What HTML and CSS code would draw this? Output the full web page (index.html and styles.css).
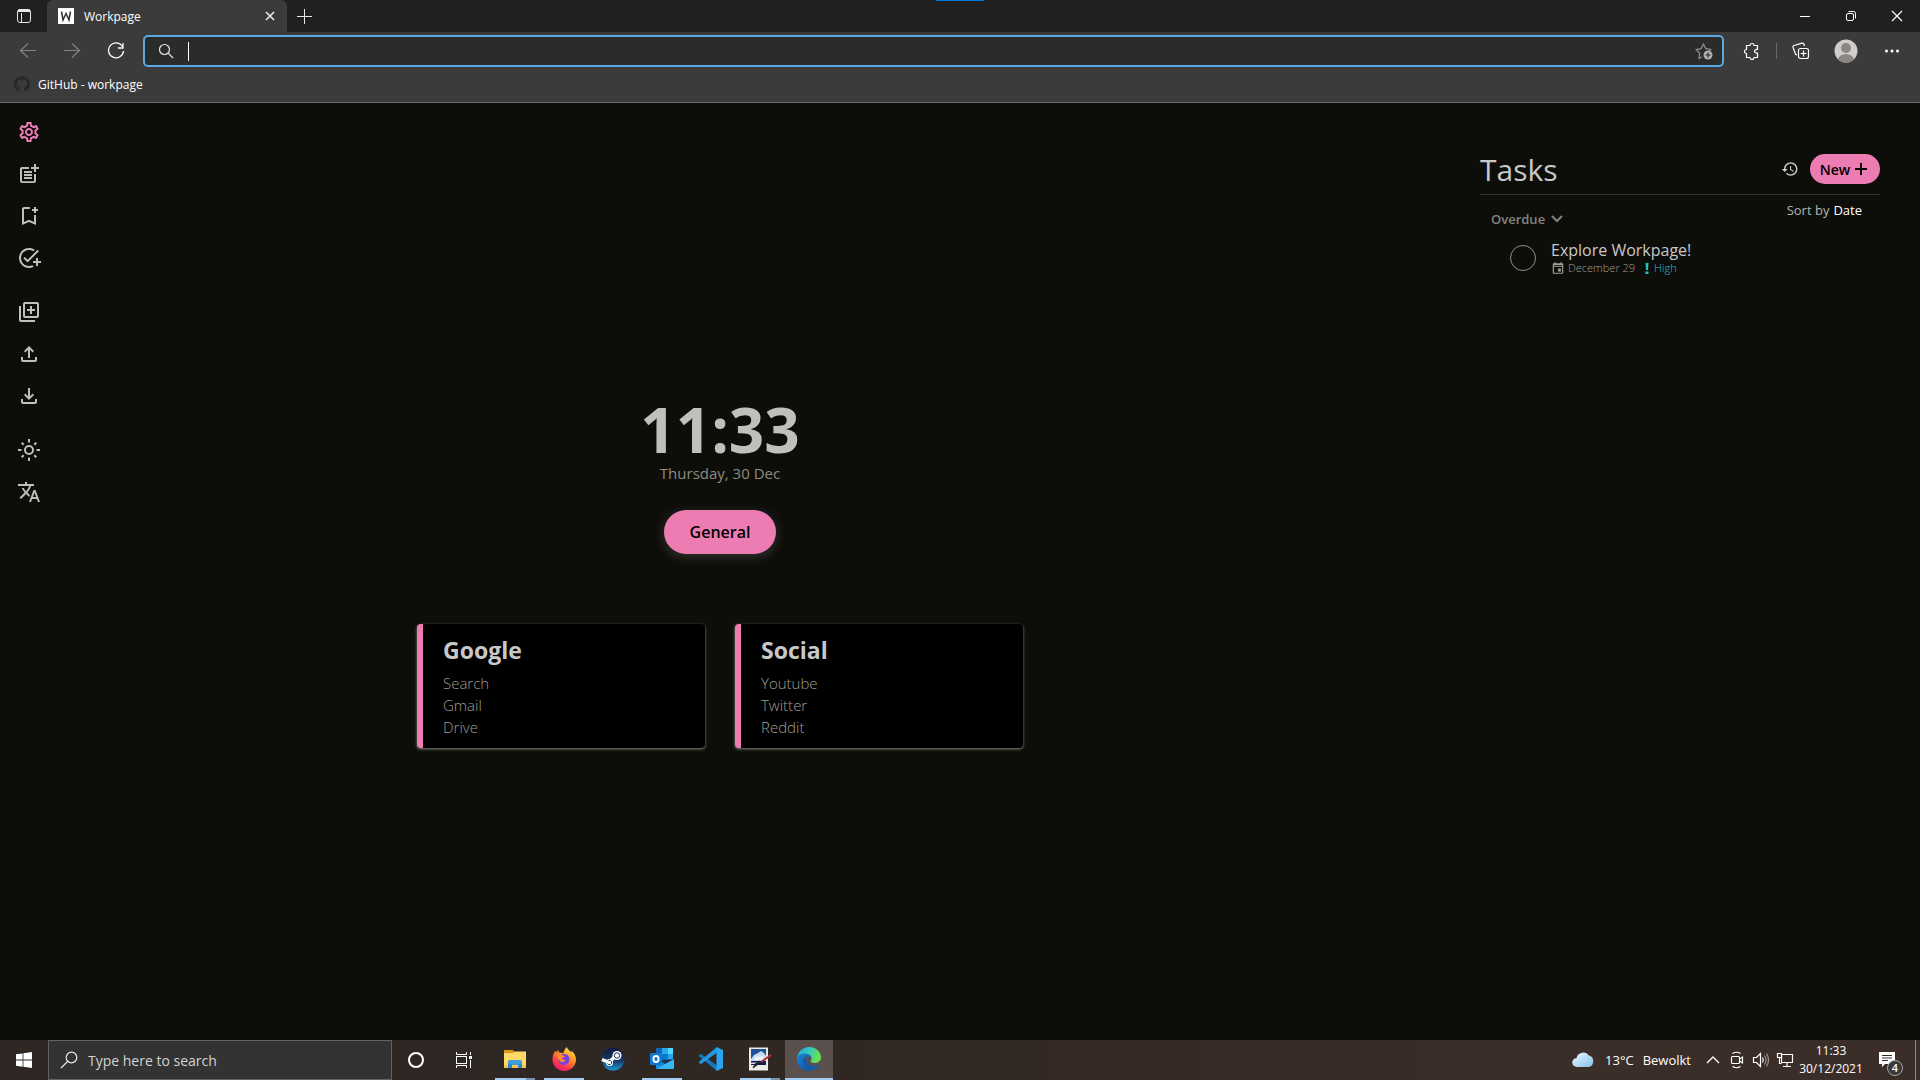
FILE: index.html
```html
<!DOCTYPE html>
<html lang="en">
<head>
<meta charset="utf-8">
<title>Workpage</title>
<link rel="stylesheet" href="styles.css">
</head>
<body>
<header class="browser">
  <div class="tabstrip">
    <button class="tab-actions" aria-label="Tab actions"><svg width="16" height="16" viewBox="0 0 16 16" fill="none" stroke="#e8e8e8"><rect x="1.5" y="1.5" width="13" height="13" rx="2.5"/><path d="M2 3.5h12M5.500 5v9.500" /><path d="M2 2.500h12" stroke-width="2"/></svg></button>
    <div class="tab">
      <span class="favicon"><svg width="16" height="16" viewBox="0 0 16 16" fill="none" stroke="#333" stroke-width="1.500"><path d="M3.500 3.500l1.500 8.500 3-6.500 3 6.500 1.500-8.500"/></svg></span>
      <span class="tab-title">Workpage</span>
      <button class="tab-close" aria-label="Close tab"><svg width="10" height="10" viewBox="0 0 10 10" stroke="#f0f0f0" stroke-width="1.500"><path d="M1 1l8 8M9 1L1 9"/></svg></button>
    </div>
    <button class="new-tab" aria-label="New tab"><svg width="16" height="16" viewBox="0 0 16 16" stroke="#e8e8e8"><path d="M8.500 1v15M1 8.500h15"/></svg></button>
    <span class="drag-mark"></span>
    <div class="window-controls">
      <button aria-label="Minimize"><svg width="12" height="12" viewBox="0 0 12 12" stroke="#fff"><path d="M1 6.500h10"/></svg></button>
      <button aria-label="Restore"><svg width="12" height="12" viewBox="0 0 12 12" fill="none" stroke="#fff"><rect x="1.500" y="3.500" width="7" height="7" rx="1.500"/><path d="M3.500 1.500h5a2 2 0 0 1 2 2v5"/></svg></button>
      <button aria-label="Close"><svg width="12" height="12" viewBox="0 0 12 12" stroke="#fff" stroke-width="1.200"><path d="M1 1l10 10M11 1L1 11"/></svg></button>
    </div>
  </div>
  <div class="toolbar">
    <div class="nav">
      <button aria-label="Back"><svg width="18" height="18" viewBox="0 0 18 18" fill="none" stroke="#828282" stroke-width="1.200"><path d="M17 8.500H2M9 1.500l-7.500 7 7.500 7"/></svg></button>
      <button aria-label="Forward"><svg width="18" height="18" viewBox="0 0 18 18" fill="none" stroke="#828282" stroke-width="1.200"><path d="M1 8.500h15M9 1.500l7.500 7-7.500 7"/></svg></button>
      <button aria-label="Refresh"><svg width="18" height="18" viewBox="0 0 18 18" fill="none" stroke="#fff" stroke-width="1.300"><path d="M15.500 4.500A7.500 7.500 0 1 0 16.500 9M16 1v5h-5"/></svg></button>
    </div>
    <label class="address">
      <svg width="16" height="16" viewBox="0 0 16 16" fill="none" stroke="#e8e8e8" stroke-width="1.200"><circle cx="6.500" cy="6.500" r="5"/><path d="M10.200 10.200l4.800 4.800"/></svg>
      <span class="caret"></span>
      <input type="text" aria-label="Address and search bar">
      <svg width="18" height="18" viewBox="0 0 18 18" fill="none" stroke="#929292" stroke-width="1.200"><path d="M7 15l-3 1.500.6-5.200L1.200 7.600l4.900-.9L8.500 2l2.300 4.700 5 .8-1.600 1.600"/><circle cx="13" cy="13" r="4.500" fill="#b0b0b0" stroke="none"/><path d="M13 10.500v5M10.500 13h5" stroke="#2b2b2b"/></svg>
    </label>
    <div class="tools">
      <button aria-label="Extensions"><svg width="18" height="18" viewBox="0 0 18 18" fill="none" stroke="#fff" stroke-width="1.200"><path d="M3.500 3.500h3.500a2 2 0 0 1 4 0h3.500v4c-4-.5-4 4 0 3.500v4.500H11a2 2 0 0 1-4 0H3.500v-4a2 2 0 0 1 0-4z" stroke-linejoin="round"/></svg></button>
      <span class="divider"></span>
      <button aria-label="Collections"><svg width="18" height="18" viewBox="0 0 18 18" fill="none" stroke="#fff" stroke-width="1.200"><rect x="6.500" y="6.500" width="10" height="10" rx="2"/><path d="M11.500 8.500v6M8.500 11.500h6M12.500 4l-.7-2a1.500 1.500 0 0 0-1.900-.8L2 3.500a1.500 1.500 0 0 0-1 1.900l2.500 6.500c.3.700.8.900 1.500.8"/></svg></button>
      <button class="profile" aria-label="Profile"><svg width="24" height="24" viewBox="0 0 24 24"><clipPath id="face"><circle cx="12" cy="12" r="11.500"/></clipPath><g clip-path="url(#face)"><path fill="#d0cec9" d="M0 0h24v24H0z"/><circle cx="12" cy="9" r="5" fill="#8b8782"/><ellipse cx="12" cy="21" rx="8" ry="6" fill="#8b8782"/></g></svg></button>
      <button aria-label="More"><svg width="16" height="16" viewBox="0 0 16 16" fill="#fff"><circle cx="2.500" cy="8" r="1.500"/><circle cx="8" cy="8" r="1.500"/><circle cx="13.500" cy="8" r="1.500"/></svg></button>
    </div>
  </div>
  <nav class="favorites">
    <a href="#"><svg width="16" height="16" viewBox="0 0 16 16" fill="#24292e"><path d="M8 0C3.580 0 0 3.580 0 8c0 3.540 2.290 6.530 5.470 7.590.4.070.55-.17.55-.38 0-.19-.01-.82-.01-1.490-2.010.37-2.530-.49-2.690-.94-.09-.23-.48-.94-.82-1.130-.28-.15-.68-.52-.01-.53.630-.01 1.080.58 1.230.82.720 1.210 1.870.87 2.330.66.070-.52.280-.87.510-1.070-1.780-.2-3.640-.89-3.640-3.950 0-.87.310-1.590.82-2.150-.08-.2-.36-1.020.08-2.120 0 0 .67-.21 2.200.82.640-.18 1.320-.27 2-.27s1.360.09 2 .27c1.530-1.040 2.200-.82 2.200-.82.440 1.100.160 1.920.080 2.120.510.560.820 1.270.820 2.150 0 3.070-1.870 3.750-3.650 3.950.290.250.540.730.540 1.480 0 1.070-.010 1.930-.010 2.200 0 .210.150.460.550.380A8.010 8.010 0 0 0 16 8c0-4.420-3.580-8-8-8z"/></svg>GitHub - workpage</a>
  </nav>
</header>

<div class="page">
  <aside class="sidebar">
    <div class="group">
      <button class="active" aria-label="Settings"><svg viewBox="0 0 24 24"><path d="M19.430 12.980c.04-.32.07-.64.07-.98 0-.34-.03-.66-.07-.98l2.110-1.650c.19-.15.24-.42.12-.64l-2-3.460c-.09-.16-.26-.25-.44-.25-.06 0-.12.010-.17.030l-2.490 1c-.52-.4-1.080-.73-1.690-.98l-.38-2.650C14.460 2.180 14.250 2 14 2h-4c-.25 0-.46.180-.49.420l-.38 2.650c-.61.250-1.170.590-1.690.980l-2.490-1c-.06-.02-.12-.03-.18-.03-.17 0-.34.090-.43.250l-2 3.460c-.13.220-.07.490.120.640l2.110 1.650c-.04.320-.07.650-.07.980 0 .330.030.660.070.980l-2.110 1.650c-.19.150-.24.420-.12.640l2 3.460c.090.160.260.250.440.250.060 0 .12-.01.17-.03l2.490-1c.520.4 1.080.730 1.690.980l.380 2.650c.030.240.240.420.490.420h4c.25 0 .46-.18.490-.42l.380-2.650c.61-.25 1.170-.59 1.690-.98l2.490 1c.060.020.120.030.180.030.170 0 .34-.09.430-.25l2-3.460c.120-.22.070-.49-.12-.64l-2.110-1.650zm-1.980-1.710c.040.310.050.520.050.730 0 .21-.02.430-.05.730l-.14 1.130.890.7 1.080.840-.7 1.210-1.270-.51-1.040-.42-.9.680c-.43.320-.84.560-1.250.730l-1.060.430-.16 1.130-.2 1.350h-1.400l-.19-1.350-.16-1.130-1.060-.43c-.43-.18-.83-.41-1.230-.71l-.91-.7-1.060.430-1.270.510-.7-1.210 1.080-.84.890-.7-.14-1.130c-.03-.31-.05-.54-.05-.74s.02-.43.05-.73l.14-1.130-.89-.7-1.080-.84.7-1.210 1.270.510 1.040.420.9-.68c.430-.32.840-.56 1.250-.73l1.060-.43.160-1.130.2-1.350h1.390l.190 1.350.160 1.130 1.060.430c.430.180.830.410 1.230.710l.910.7 1.060-.43 1.270-.51.7 1.210-1.070.850-.89.7.14 1.130zM12 8c-2.210 0-4 1.790-4 4s1.790 4 4 4 4-1.790 4-4-1.790-4-4-4zm0 6c-1.100 0-2-.9-2-2s.9-2 2-2 2 .9 2 2-.9 2-2 2z"/></svg></button>
      <button aria-label="New note"><svg viewBox="0 0 24 24"><path d="M17 19.220H5V7h7V5H5c-1.100 0-2 .9-2 2v12c0 1.100.9 2 2 2h12c1.100 0 2-.9 2-2v-7h-2zM19 2h-2v3h-3v2h3v3h2V7h3V5h-3zM7 9h8v2H7zM7 12h8v2H7zM7 15h8v2H7z"/></svg></button>
      <button aria-label="New bookmark"><svg viewBox="0 0 24 24"><path d="M17 11v6.970l-5-2.140-5 2.140V5h6V3H7c-1.100 0-2 .9-2 2v16l7-3 7 3V11zM21 7h-2v2h-2V7h-2V5h2V3h2v2h2z"/></svg></button>
      <button aria-label="New task"><svg viewBox="0 0 24 24"><path d="M22 5.180L10.590 16.600l-4.240-4.240 1.410-1.410 2.830 2.830 10-10L22 5.180zM12 20c-4.410 0-8-3.590-8-8s3.590-8 8-8c1.570 0 3.040.460 4.280 1.250l1.450-1.450C16.100 2.670 14.130 2 12 2 6.480 2 2 6.480 2 12s4.480 10 10 10c1.730 0 3.360-.44 4.780-1.220l-1.500-1.500c-1 .46-2.110.72-3.280.72zm7-5h-3v2h3v3h2v-3h3v-2h-3v-3h-2v3z"/></svg></button>
    </div>
    <div class="group">
      <button aria-label="Add page"><svg viewBox="0 0 24 24"><path d="M4 6H2v14c0 1.100.9 2 2 2h14v-2H4V6zm16-4H8c-1.100 0-2 .9-2 2v12c0 1.100.9 2 2 2h12c1.100 0 2-.9 2-2V4c0-1.100-.9-2-2-2zm0 14H8V4h12v12zm-7-2h2v-3h3V9h-3V6h-2v3h-3v2h3z"/></svg></button>
      <button aria-label="Import"><svg viewBox="0 0 24 24"><path d="M18 15v3H6v-3H4v3c0 1.100.9 2 2 2h12c1.100 0 2-.9 2-2v-3h-2zM7 9l1.410 1.410L11 7.830V16h2V7.830l2.590 2.580L17 9l-5-5-5 5z"/></svg></button>
      <button aria-label="Export"><svg viewBox="0 0 24 24"><path d="M18 15v3H6v-3H4v3c0 1.100.9 2 2 2h12c1.100 0 2-.9 2-2v-3h-2zm-1-4l-1.410-1.410L13 12.170V4h-2v8.170L8.410 9.590 7 11l5 5 5-5z"/></svg></button>
    </div>
    <div class="group">
      <button aria-label="Theme"><svg viewBox="0 0 24 24"><g fill="none" stroke="currentColor" stroke-width="2"><circle cx="12" cy="12" r="4"/><path d="M12 1v3.500M12 19.500V23M1 12h3.500M19.500 12H23M4.700 4.700l2 2M17.300 17.300l2 2M4.700 19.300l2-2M17.300 6.700l2-2"/></g></svg></button>
      <button aria-label="Language"><svg viewBox="0 0 24 24"><path d="M12.870 15.070l-2.540-2.510.03-.03c1.740-1.940 2.980-4.170 3.710-6.530H17V4h-7V2H8v2H1v1.990h11.170C11.500 7.920 10.440 9.750 9 11.350 8.070 10.320 7.300 9.190 6.690 8h-2c.73 1.630 1.730 3.170 2.980 4.560l-5.090 5.020L4 19l5-5 3.110 3.110.76-2.040zM18.500 10h-2L12 22h2l1.120-3h4.750L21 22h2l-4.500-12zm-2.620 7l1.620-4.330L19.120 17h-3.240z"/></svg></button>
    </div>
  </aside>

  <main class="home">
    <h1 class="clock">11:33</h1>
    <p class="date">Thursday, 30 Dec</p>
    <button class="page-button">General</button>
    <div class="cards">
      <section class="card">
        <h2>Google</h2>
        <a href="#">Search</a>
        <a href="#">Gmail</a>
        <a href="#">Drive</a>
      </section>
      <section class="card">
        <h2>Social</h2>
        <a href="#">Youtube</a>
        <a href="#">Twitter</a>
        <a href="#">Reddit</a>
      </section>
    </div>
  </main>

  <section class="tasks">
    <div class="tasks-head">
      <h2>Tasks</h2>
      <button class="history" aria-label="History"><svg width="18" height="18" viewBox="0 0 24 24"><path fill="currentColor" d="M13 3c-4.970 0-9 4.030-9 9H1l3.890 3.890.07.14L9 12H6c0-3.870 3.130-7 7-7s7 3.130 7 7-3.130 7-7 7c-1.930 0-3.680-.79-4.940-2.060l-1.420 1.420C8.270 19.990 10.510 21 13 21c4.970 0 9-4.030 9-9s-4.030-9-9-9zm-1 5v5l4.280 2.540.72-1.210-3.500-2.080V8H12z"/></svg></button>
      <button class="new-task">New<svg width="12" height="12" viewBox="0 0 12 12" stroke="#000" stroke-width="2"><path d="M6 0v12M0 6h12"/></svg></button>
    </div>
    <div class="tasks-bar">
      <button class="overdue">Overdue<svg width="12" height="8" viewBox="0 0 12 8" fill="none" stroke="currentColor" stroke-width="2"><path d="M1 1l5 5 5-5"/></svg></button>
      <button class="sort">Sort by <span>Date</span></button>
    </div>
    <div class="task">
      <input type="checkbox" id="task-1">
      <div class="task-body">
        <label for="task-1">Explore Workpage!</label>
        <p class="meta">
          <svg width="14" height="14" viewBox="0 0 24 24"><path fill="currentColor" d="M19 4h-1V2h-2v2H8V2H6v2H5c-1.110 0-1.990.9-1.990 2L3 20c0 1.100.89 2 2 2h14c1.100 0 2-.9 2-2V6c0-1.100-.9-2-2-2zm0 16H5V10h14v10zm0-12H5V7h14v1zm-7 5h5v5h-5z"/></svg>
          <span>December 29</span>
          <svg class="high mark" width="4" height="11" viewBox="0 0 4 11"><path fill="currentColor" d="M.5 0h3L3 7H1zM.5 8.500h3V11h-3z"/></svg>
          <span class="high">High</span>
        </p>
      </div>
    </div>
  </section>
</div>

<footer class="taskbar">
  <button class="start" aria-label="Start"><svg width="16" height="16" viewBox="0 0 16 16" fill="#fff"><path d="M0 2.300L6.600 1.400v6.200H0zM7.400 1.300L16 0v7.600H7.400zM0 8.400h6.600v6.300L0 13.800zM7.400 8.400H16V16l-8.600-1.200z"/></svg></button>
  <label class="search">
    <svg width="18" height="18" viewBox="0 0 18 18" fill="none" stroke="#e8e8e8" stroke-width="1.200"><circle cx="11.500" cy="6.500" r="5.300"/><path d="M7.800 10.300L1 17"/></svg>
    <input type="text" placeholder="Type here to search" aria-label="Search">
  </label>
  <button class="system" aria-label="Cortana"><svg width="18" height="18" viewBox="0 0 18 18" fill="none" stroke="#fff" stroke-width="2"><circle cx="9" cy="9" r="7"/></svg></button>
  <button class="system" aria-label="Task view"><svg width="18" height="18" viewBox="0 0 18 18" fill="none" stroke="#fff"><rect x="1.500" y="5.500" width="10" height="7"/><path d="M1.500 1v2.500h10V1M1.500 17v-2.500h10V17M15.500 1v3M15.500 9v8"/><path d="M14 5h3v3h-3z" fill="#fff" stroke="none"/></svg></button>
  <div class="apps">
    <button class="app open stacked" aria-label="File Explorer"><svg width="24" height="24" viewBox="0 0 24 24"><path fill="#d99b16" d="M1 3h9l1 2v3H1z"/><path fill="#ffd967" d="M1 6h9l1-1.500h12V21H1z"/><path fill="#f4c44c" d="M1 18h22v3H1z"/><path fill="#3f9bdc" d="M5 21v-6q0-2 2-2h10q2 0 2 2v6h-4v-3H9v3z"/><path fill="#1979ca" d="M5 17h4v4H5zM15 17h4v4h-4z" opacity=".5"/></svg></button>
    <button class="app open" aria-label="Firefox"><svg width="24" height="24" viewBox="0 0 24 24"><defs><linearGradient id="fire" x1=".8" y1="0" x2=".2" y2="1"><stop offset="0" stop-color="#fff14a"/><stop offset=".35" stop-color="#ff9a28"/><stop offset=".7" stop-color="#ff3c49"/><stop offset="1" stop-color="#e3127e"/></linearGradient></defs><path fill="url(#fire)" d="M14.500 0c1.500 2.500 3 3.500 5 5.500.1-1 0-1.500-.3-2C22 5.500 24 9 24 12.500 24 19 18.500 24 12.200 24 5.500 24 .5 19 .5 12.500.5 9 1.500 6 3.500 3.500L4 5.500 6.500 3l.5 2.500c2 0 2.800.3 4 1C12 4 13 2 14.500 0z"/><path fill="#7542e5" d="M6.500 12.500C6.500 9.500 9 7 12 7c3.500 0 6 2.700 5.500 6-.5 3-3 5-5.700 5-3 0-5.300-2.500-5.300-5.500z"/><path fill="#ff8a20" d="M4.500 7c2.500-1 5 0 6 1.500l2.500.5c-.5 1.500-3 1.500-3.200 2.500-.1 1 2 1.500 3.700 1-.5 2.500-3 3.500-5 2-2-1.500-2.500-5-4-7.500z"/></svg></button>
    <button class="app" aria-label="Steam"><svg width="24" height="24" viewBox="0 0 24 24"><defs><linearGradient id="steam" x2="0" y2="1"><stop offset="0" stop-color="#121b3f"/><stop offset=".55" stop-color="#153761"/><stop offset="1" stop-color="#1b9ad6"/></linearGradient></defs><circle cx="12" cy="12" r="11.500" fill="url(#steam)"/><path d="M1 12.500l7 3 5-5 2.500-2.500" stroke="#fff" stroke-width="3.500" fill="none"/><circle cx="16" cy="8.500" r="4.500" fill="#fff"/><circle cx="16" cy="8.500" r="2.700" fill="#fff" stroke="#1b2d50"/><circle cx="8.500" cy="15.500" r="3.500" fill="#fff"/><path d="M6.500 16.500a2.200 2.200 0 1 0 1-3" fill="none" stroke="#1b3b66"/></svg></button>
    <button class="app open" aria-label="Outlook"><svg width="24" height="24" viewBox="0 0 24 24"><path fill="#1066b5" d="M6 1h17v12H6z"/><path fill="#28a8ea" d="M12 1h6v6h-6z"/><path fill="#50d9ff" d="M18 1h5v6h-5z"/><path fill="#0078d4" d="M12 7h6v6h-6z"/><path fill="#28a8ea" d="M18 7h5v5h-5z"/><path fill="#123b6d" d="M6 11l9 6 8-5v2H6z"/><path fill="#1a91dc" d="M6 12l18 10H7q-1 0-1-1z"/><path fill="#35b8f1" d="M24 12v9q0 1-1 1H7l8-5z"/><rect y="6" width="12" height="12" rx="1" fill="#0f78d4"/><ellipse cx="6" cy="12" rx="2.600" ry="3" fill="none" stroke="#fff" stroke-width="1.800"/></svg></button>
    <button class="app" aria-label="Visual Studio Code"><svg width="24" height="24" viewBox="0 0 24 24"><path fill="#1478bd" d="M0 8.500l1.800-1.700L18 18.500V24L.3 9.500z"/><path fill="#2199e5" d="M0 15.500l1.800 1.700L18 5.500V0L.3 14.500z"/><path fill="#2aa5f0" d="M17.500 0L24 3v18l-6.500 3z"/></svg></button>
    <button class="app open stacked" aria-label="Paint tool"><svg width="24" height="24" viewBox="0 0 24 24"><path fill="#eeece6" d="M1 .5h19v23H1z"/><path fill="#1f4f9c" d="M3 2h15v14H3z"/><path fill="#c3dbf2" d="M3 12l3-4 4-2 3-2 3 2 2 3v5H3z"/><path fill="#e6f1fb" d="M5 13l3-4 4 1 3-2 1 5z"/><path fill="#0f1d55" d="M3 14h15v4H3z"/><path fill="#d9d9dd" d="M3 15.500h6l-1 1.500H3z"/><path d="M23 8L13 15" stroke="#bd2b2b" stroke-width="2"/><path d="M13 15l-4 3-4 3 2-4 5-3" fill="#20242c" stroke="#20242c"/></svg></button>
    <button class="app open current" aria-label="Edge"><svg width="24" height="24" viewBox="0 0 24 24"><defs><linearGradient id="edge-top" x2="1" y2=".3"><stop offset="0" stop-color="#249fd8"/><stop offset=".5" stop-color="#32c7c5"/><stop offset="1" stop-color="#69e14e"/></linearGradient><linearGradient id="edge-low" x2="1" y2="1"><stop offset="0" stop-color="#1687d3"/><stop offset="1" stop-color="#124ba4"/></linearGradient></defs><path fill="url(#edge-top)" d="M0 11.500C.5 5 5.500 0 12 0c7 0 12 5 12 10 0 4-3 6-6.500 6-2.500 0-4-1-4-1.700 0-.6 1-1 1-2.800C14.500 9 12 7 8.500 7 4.500 7 1 9 0 11.500z"/><path fill="url(#edge-low)" d="M0 12.500C0 9 3.500 6.700 7.500 6.700c4 0 7 2 7 5-1-1.500-2-2-3.500-2-3 0-5 2-5 5 0 4 3 7.500 8 9.100-1 .2-1.500.2-2 .2-7 0-12-5.500-12-11.500z"/><path fill="#155aa9" d="M9.500 10.300c-3 1.200-3.800 4-2.500 7.200 1.500 4 5 6.300 8.500 6 3-.8 5.300-2.500 6.800-5 .5-.8-.2-1-1-.6-6 3-13.500-1-11.800-7.600z"/></svg></button>
  </div>
  <div class="tray">
    <button class="weather"><svg width="24" height="18" viewBox="0 0 24 18"><defs><linearGradient id="cloud" x2="1" y2="1"><stop offset="0" stop-color="#f0f9ff"/><stop offset="1" stop-color="#83c2ee"/></linearGradient></defs><path fill="url(#cloud)" d="M5 16a4.500 4.500 0 0 1-.5-9A7 7 0 0 1 17 4.500 6 6 0 0 1 17 16z"/></svg><span>13°C</span><span>Bewolkt</span></button>
    <button class="icon" aria-label="Show hidden icons"><svg width="14" height="8" viewBox="0 0 14 8" fill="none" stroke="#fff" stroke-width="1.400"><path d="M1 7l6-6 6 6"/></svg></button>
    <button class="icon" aria-label="Meet now"><svg width="16" height="18" viewBox="0 0 16 18" fill="none" stroke="#fff" stroke-width="1.200"><rect x="2.500" y="5.500" width="8" height="7" rx="1"/><path d="M10.500 8l3-2v6l-3-2M3.500 2.500q4-2.500 8 0M3.500 15.500q4 2.500 8 0"/></svg></button>
    <button class="icon" aria-label="Volume"><svg width="18" height="16" viewBox="0 0 18 16" fill="none" stroke="#fff" stroke-width="1.200"><path d="M1.500 5.500h3l4-4v13l-4-4h-3zM10.500 5.500q1.500 2.500 0 5"/><path d="M12.500 3.500q3 4.500 0 9M14.500 1.500q4 6.500 0 13" stroke="#9c9593"/></svg></button>
    <button class="icon" aria-label="Network"><svg width="18" height="16" viewBox="0 0 18 16" fill="none" stroke="#fff" stroke-width="1.200"><path d="M5.500 2.500h11v8h-11zM11 10.500v4M7 14.500h8"/><path d="M1.500 1.500h4v4h-4zM3.500 5.500v6h2" fill="#3a2d28"/></svg></button>
    <button class="time"><span>11:33</span><span>30/12/2021</span></button>
    <button class="notifications" aria-label="Notifications"><svg width="18" height="18" viewBox="0 0 18 18"><path fill="#fff" d="M1 1h16v12H7l-3 3v-3H1z"/><path d="M4 4.500h10M4 7h10M4 9.500h6" stroke="#3a2d28"/></svg><span class="badge">4</span></button>
    <span class="desktop-edge"></span>
  </div>
</footer>
</body>
</html>
```
FILE: styles.css
```css
* {
  box-sizing: border-box;
}

body {
  margin: 0;
  min-height: 100vh;
  display: flex;
  flex-direction: column;
  background: #0d0e0a;
  color: #c8c8c8;
  font-family: "Open Sans", "Noto Sans", sans-serif;
}

h1, h2, p {
  margin: 0;
}

button, input {
  font: inherit;
  color: inherit;
  background: none;
  border: 0;
  padding: 0;
  outline: 0;
}

button {
  display: flex;
  align-items: center;
  justify-content: center;
}

a {
  color: inherit;
  text-decoration: none;
}

svg {
  flex: none;
}

/* Browser frame */
.browser {
  background: #3b3b3b;
  border-bottom: 1px solid #6a6a6a;
  color: #fff;
  font-size: 12px;
}

.tabstrip {
  position: relative;
  display: flex;
  height: 32px;
  background: #202020;
}

.tab-actions {
  width: 47px;
}

.tab {
  display: flex;
  align-items: center;
  gap: 10px;
  width: 240px;
  padding: 0 12px 0 11px;
  border-radius: 6px 6px 0 0;
  background: #3b3b3b;
}

.favicon {
  width: 16px;
  height: 16px;
  background: #fff;
}

.tab-title {
  flex: 1;
}

.new-tab {
  width: 34px;
}

.drag-mark {
  position: absolute;
  top: 0;
  left: 50%;
  width: 48px;
  height: 1px;
  margin-left: -24px;
  background: #0078d7;
}

.window-controls {
  display: flex;
  margin-left: auto;
}

.window-controls button {
  width: 46px;
}

.toolbar {
  display: flex;
  align-items: center;
  height: 38px;
}

.nav {
  display: flex;
  gap: 26px;
  padding: 0 18px 0 19px;
}

.address {
  flex: 1;
  display: flex;
  align-items: center;
  height: 32px;
  padding: 0 9px 0 13px;
  border: 2px solid #5ba8e2;
  border-radius: 5px;
  background: #2b2b2b;
}

.address input {
  flex: 1;
}

.caret {
  width: 1px;
  height: 19px;
  margin-left: 14px;
  background: #fff;
}

.tools {
  display: flex;
  align-items: center;
  gap: 15px;
  padding: 0 20px 0 19px;
}

.profile {
  margin: 0 11px 0 9px;
}

.divider {
  width: 1px;
  height: 16px;
  background: #686868;
}

.favorites {
  display: flex;
  padding: 4px 14px 8px;
}

.favorites a {
  display: flex;
  align-items: center;
  gap: 8px;
  height: 20px;
}

/* Start page */
.page {
  flex: 1;
  display: grid;
  grid-template-columns: 58px minmax(0, 1fr) 440px;
}

.sidebar {
  display: flex;
  flex-direction: column;
  align-items: center;
  gap: 30px;
  padding-top: 17px;
  color: #c0c0bb;
}

.group {
  display: flex;
  flex-direction: column;
  gap: 18px;
}

.group svg {
  width: 24px;
  height: 24px;
  fill: currentColor;
}

.active {
  color: #ec7cb1;
}

.home {
  display: flex;
  flex-direction: column;
  align-items: center;
  justify-content: center;
  padding-right: 98px;
}

.clock {
  font-size: 62px;
  line-height: 66px;
  color: #c0c0bb;
}

.date {
  font-size: 15px;
  line-height: 22px;
  color: #8d8b80;
}

.page-button {
  width: 112px;
  height: 44px;
  margin: 26px 0 70px;
  border-radius: 22px;
  background: #ec7cb1;
  box-shadow: 0 3px 12px #35352f;
  color: #000;
  font-size: 16px;
  font-weight: 600;
}

.cards {
  display: flex;
  gap: 30px;
}

.card {
  display: flex;
  flex-direction: column;
  width: 288px;
  padding: 10px 20px;
  border-left: 6px solid #ec7cb1;
  border-radius: 4px;
  background: #000;
  box-shadow: 0 1px 3px #8a897c;
  color: #a19f92;
  font-size: 15px;
  font-weight: 300;
  line-height: 22px;
}

.card h2 {
  margin-bottom: 6px;
  color: #c8c8c8;
  font-size: 23px;
  font-weight: 700;
  line-height: 32px;
}

/* Task panel */
.tasks {
  padding: 44px 40px 0 0;
}

.tasks-head {
  display: flex;
  align-items: center;
  height: 48px;
  padding-bottom: 3px;
  border-bottom: 1px solid #38302a;
}

.tasks-head h2 {
  margin-right: auto;
  font-size: 30px;
  font-weight: 400;
}

.history {
  margin-right: 11px;
}

.new-task {
  gap: 5px;
  width: 70px;
  height: 30px;
  padding-right: 3px;
  border-radius: 15px;
  background: #ec7cb1;
  color: #000;
  font-size: 14px;
  font-weight: 600;
}

.tasks-bar {
  display: flex;
  justify-content: space-between;
  align-items: flex-start;
  padding: 5px 18px 0 11px;
  font-size: 13px;
  line-height: 20px;
}

.overdue {
  gap: 6px;
  padding-top: 9px;
  color: #85837a;
  font-weight: 600;
}

.sort {
  gap: 4px;
  color: #b5b5b0;
}

.sort span {
  color: #fff;
}

.task {
  display: flex;
  align-items: center;
  gap: 15px;
  padding: 11px 0 0 30px;
}

.task input {
  appearance: none;
  width: 26px;
  height: 26px;
  margin: 0;
  border: 1px solid #918f82;
  border-radius: 50%;
}

.task-body label {
  display: block;
  font-size: 16px;
  line-height: 20px;
}

.meta {
  display: flex;
  align-items: center;
  gap: 3px;
  color: #a19f92;
  font-size: 11px;
  font-weight: 300;
  line-height: 16px;
}

.high {
  color: #29bfc2;
}

.mark {
  margin: 0 2px 0 7px;
}

/* Windows taskbar */
.taskbar {
  display: flex;
  height: 40px;
  background: linear-gradient(90deg, #2e2724, #302722 45%, #3b2d28 80%);
  color: #fff;
}

.start, .system {
  width: 48px;
}

.search {
  display: flex;
  align-items: center;
  gap: 10px;
  width: 344px;
  padding: 0 11px;
  border: 1px solid #636363;
  background: #333;
}

.search input {
  flex: 1;
  font-size: 14px;
}

.search input::placeholder {
  color: #d2d2d2;
}

.apps {
  display: flex;
  gap: 1px;
  margin-left: 3px;
}

.app {
  width: 48px;
  border-bottom: 2px solid transparent;
}

.app.open {
  background: linear-gradient(#a3cdf5, #a3cdf5) center 38px / 40px 2px no-repeat;
  background-origin: border-box;
  background-clip: border-box;
}

.app.stacked {
  background-image: linear-gradient(90deg, #a3cdf5 31px, #7593ac 31px);
}

.app.current {
  background: #5a504d;
  border-color: #a3cdf5;
}

.tray {
  display: flex;
  margin-left: auto;
}

.weather {
  gap: 9px;
  margin-right: 10px;
  font-size: 13px;
}

.icon {
  width: 24px;
}

.time {
  flex-direction: column;
  width: 68px;
  font-size: 12px;
  line-height: 18px;
}

.notifications {
  position: relative;
  width: 47px;
  padding-right: 4px;
}

.badge {
  position: absolute;
  right: 9px;
  bottom: 4px;
  width: 16px;
  height: 16px;
  border: 1px solid #a5a5a5;
  border-radius: 50%;
  background: #393939;
  font-size: 11px;
  font-weight: 600;
  line-height: 14px;
}

.desktop-edge {
  width: 1px;
  margin: 0 4px 0 3px;
  background: #928884;
}
```
